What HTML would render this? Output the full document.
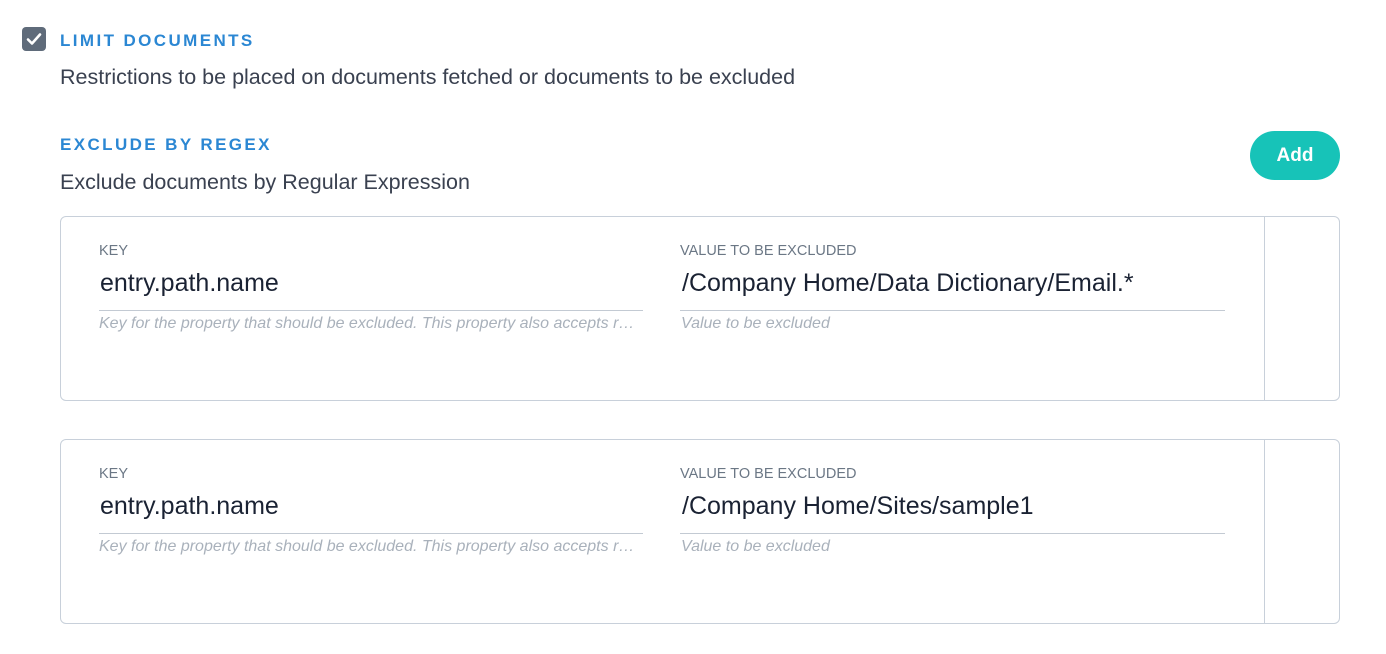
<!DOCTYPE html>
<html><head><style>
body{margin:0;width:1386px;height:654px;background:#fff;font-family:"Liberation Sans",sans-serif;position:relative;overflow:hidden}
.a{position:absolute;white-space:nowrap}
.cb{left:22px;top:27px;width:24px;height:24px;background:#5f6b7a;border-radius:4px}
.h{color:#2b87d3;font-weight:bold;font-size:17px;letter-spacing:2.4px}
.d{color:#3a4150;font-size:21.5px}
.btn{left:1250px;top:131px;width:90px;height:49px;border-radius:25px;background:#17c3b8;color:#fff;font-weight:bold;font-size:19px;text-align:center;line-height:49px}
.card{left:60px;width:1278px;height:183px;border:1px solid #c8d0da;border-radius:6px}
.div{position:absolute;left:1203px;top:0;bottom:0;border-left:1px solid #c8d0da}
.lbl{color:#6b7785;font-size:14.5px}
.val{color:#1a2233;font-size:25px}
.ln{height:1px;background:#c3cad3}
.hint{color:#a9b1bb;font-size:16px;font-style:italic}
</style></head><body>
<div class="a cb"><svg width="24" height="24" viewBox="0 0 24 24"><path d="M6 12.5l4 4 8-9" fill="none" stroke="#fff" stroke-width="2.6" stroke-linecap="round" stroke-linejoin="round"/></svg></div>
<div class="a h" style="left:60px;top:31px">LIMIT DOCUMENTS</div>
<div class="a d" style="left:60px;top:65px">Restrictions to be placed on documents fetched or documents to be excluded</div>
<div class="a h" style="left:60px;top:135px">EXCLUDE BY REGEX</div>
<div class="a d" style="left:60px;top:170px">Exclude documents by Regular Expression</div>
<div class="a btn">Add</div>

<div class="a card" style="top:216px"><div class="div"></div></div>
<div class="a lbl" style="left:99px;top:243px">KEY</div>
<div class="a lbl" style="left:680px;top:243px">VALUE TO BE EXCLUDED</div>
<div class="a val" style="left:100px;top:269px">entry.path.name</div>
<div class="a val" style="left:682px;top:269px">/Company Home/Data Dictionary/Email.*</div>
<div class="a ln" style="left:99px;top:310px;width:544px"></div>
<div class="a ln" style="left:680px;top:310px;width:545px"></div>
<div class="a hint" style="left:99px;top:315px;width:538px;overflow:hidden;text-overflow:ellipsis">Key for the property that should be excluded. This property also accepts regex</div>
<div class="a hint" style="left:681px;top:315px">Value to be excluded</div>

<div class="a card" style="top:439px"><div class="div"></div></div>
<div class="a lbl" style="left:99px;top:466px">KEY</div>
<div class="a lbl" style="left:680px;top:466px">VALUE TO BE EXCLUDED</div>
<div class="a val" style="left:100px;top:492px">entry.path.name</div>
<div class="a val" style="left:682px;top:492px">/Company Home/Sites/sample1</div>
<div class="a ln" style="left:99px;top:533px;width:544px"></div>
<div class="a ln" style="left:680px;top:533px;width:545px"></div>
<div class="a hint" style="left:99px;top:538px;width:538px;overflow:hidden;text-overflow:ellipsis">Key for the property that should be excluded. This property also accepts regex</div>
<div class="a hint" style="left:681px;top:538px">Value to be excluded</div>
</body></html>
